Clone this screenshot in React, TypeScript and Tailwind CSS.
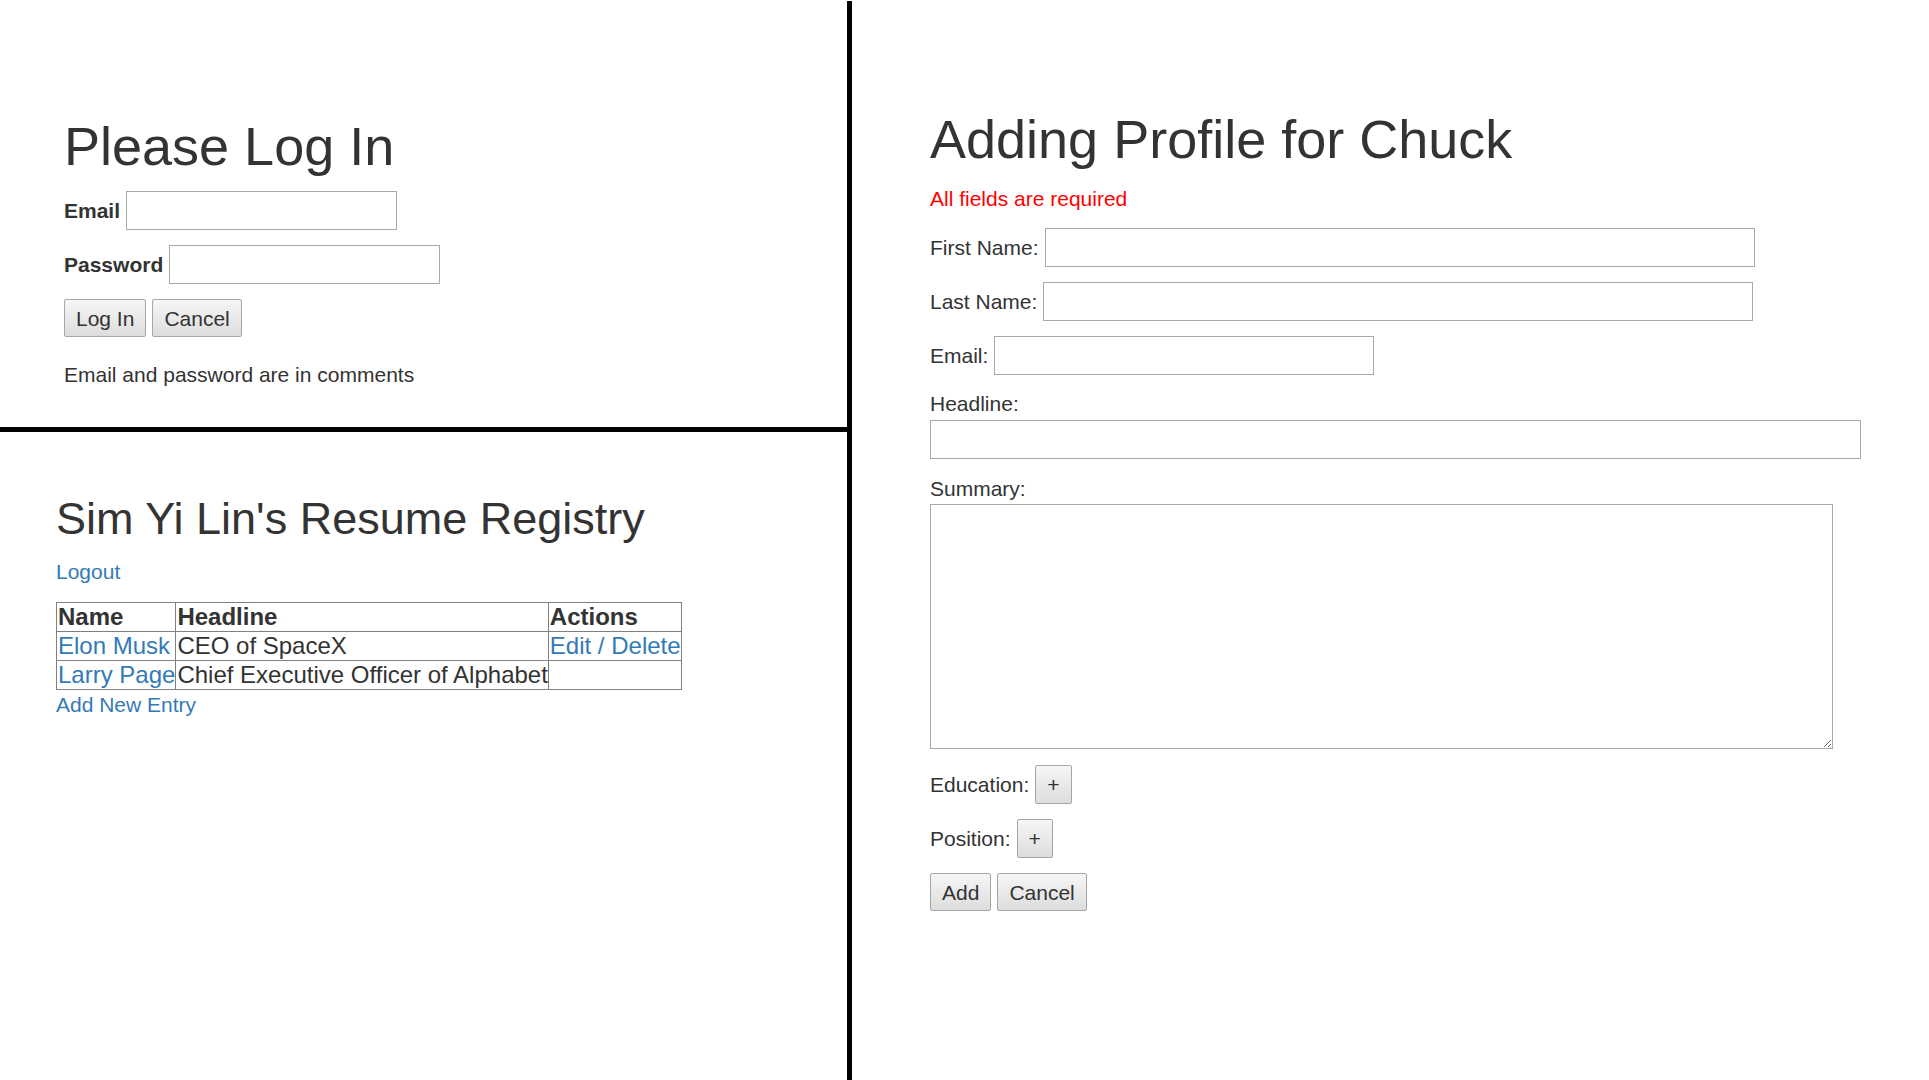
import React from "react";

const btn =
  "h-[38px] px-[11px] border border-[#a6a6a6] rounded-[2px] bg-linear-to-b from-[#f6f6f6] to-[#dddddd] text-[21px] text-[#333] leading-none";
const field = "h-[39px] border border-[#a9a9a9] bg-white";
const cell = "border border-[#808080] pl-px pr-0 text-left leading-[28px]";

const LoginPanel = () => {
  return (
    <div className="h-[427px] pl-[64px]">
      <h1 className="mt-[117px] h-[59px] text-[54px] leading-[59px]">Please Log In</h1>
      <div className="mt-[15px] flex h-[39px] items-center">
        <label className="font-bold">Email</label>
        <input className={`${field} ml-[6px] w-[271px]`} />
      </div>
      <div className="mt-[15px] flex h-[39px] items-center">
        <label className="font-bold">Password</label>
        <input type="password" className={`${field} ml-[6px] w-[271px]`} />
      </div>
      <div className="mt-[15px] flex gap-[6px]">
        <button className={btn}>Log In</button>
        <button className={btn}>Cancel</button>
      </div>
      <p className="mt-[23px] leading-[30px]">Email and password are in comments</p>
    </div>
  );
};

const rows = [
  { name: "Elon Musk", headline: "CEO of SpaceX", actions: true },
  { name: "Larry Page", headline: "Chief Executive Officer of Alphabet", actions: false },
];

const RegistryPanel = () => {
  return (
    <div className="flex-1 pl-[56px]">
      <h2 className="mt-[62px] h-[50px] text-[45px] leading-[50px]">Sim Yi Lin's Resume Registry</h2>
      <p className="mt-[13px] leading-[30px]">
        <a href="#" className="text-[#337ab7]">Logout</a>
      </p>
      <table className="mt-[15px] border-collapse border border-[#333] text-[24px]">
        <thead>
          <tr>
            <th className={`${cell} font-bold`}>Name</th>
            <th className={`${cell} font-bold`}>Headline</th>
            <th className={`${cell} font-bold`}>Actions</th>
          </tr>
        </thead>
        <tbody>
          {rows.map((r) => (
            <tr key={r.name}>
              <td className={cell}>
                <a href="#" className="text-[#337ab7]">{r.name}</a>
              </td>
              <td className={cell}>{r.headline}</td>
              <td className={cell}>
                {r.actions && (
                  <span className="text-[#337ab7]">
                    <a href="#">Edit</a> / <a href="#">Delete</a>
                  </span>
                )}
              </td>
            </tr>
          ))}
        </tbody>
      </table>
      <p className="leading-[30px]">
        <a href="#" className="text-[#337ab7]">Add New Entry</a>
      </p>
    </div>
  );
};

const ProfilePanel = () => {
  return (
    <div className="flex-1 pl-[78px]">
      <h1 className="mt-[110px] h-[59px] text-[54px] leading-[59px]">Adding Profile for Chuck</h1>
      <p className="mt-[15px] leading-[30px] text-[red]">All fields are required</p>
      <div className="mt-[14px] flex h-[39px] items-center">
        <label>First Name:</label>
        <input className={`${field} ml-[6px] w-[710px]`} />
      </div>
      <div className="mt-[15px] flex h-[39px] items-center">
        <label>Last Name:</label>
        <input className={`${field} ml-[6px] w-[710px]`} />
      </div>
      <div className="mt-[15px] flex h-[39px] items-center">
        <label>Email:</label>
        <input className={`${field} ml-[6px] w-[380px]`} />
      </div>
      <p className="mt-[14px] leading-[30px]">Headline:</p>
      <input className={`${field} mt-px block w-[931px]`} />
      <p className="mt-[15px] leading-[30px]">Summary:</p>
      <textarea className="block h-[245px] w-[903px] border border-[#a9a9a9] bg-white" />
      <div className="mt-[16px] flex h-[39px] items-center">
        <span>Education:</span>
        <button className={`${btn} ml-[6px] h-[39px]`}>+</button>
      </div>
      <div className="mt-[15px] flex h-[39px] items-center">
        <span>Position:</span>
        <button className={`${btn} ml-[6px] h-[39px]`}>+</button>
      </div>
      <div className="mt-[15px] flex gap-[6px]">
        <button className={btn}>Add</button>
        <button className={btn}>Cancel</button>
      </div>
    </div>
  );
};

export default function App() {
  return (
    <div className="flex h-[1080px] w-full bg-white font-['Liberation_Sans',Arial,Helvetica,sans-serif] text-[21px] text-[#333]">
      <div className="flex w-[847px] flex-col">
        <LoginPanel />
        <div className="h-[5px] bg-black" />
        <RegistryPanel />
      </div>
      <div className="mt-px w-[5px] bg-black" />
      <ProfilePanel />
    </div>
  );
}
